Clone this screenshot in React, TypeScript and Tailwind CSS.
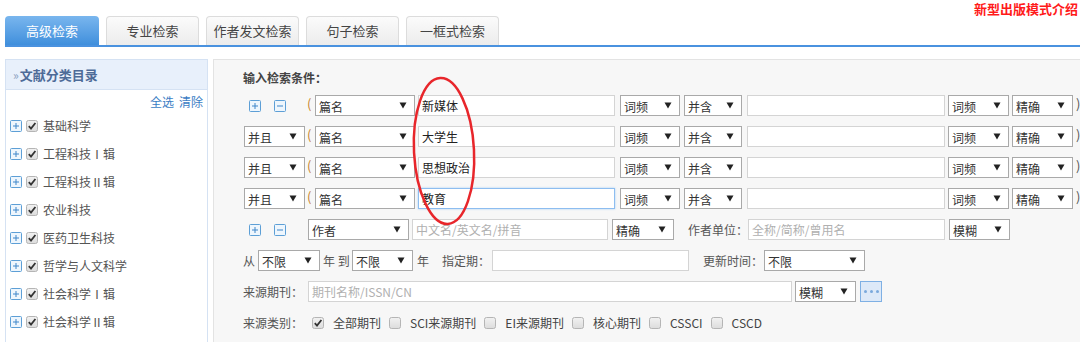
import React from 'react';

const FONT = '"Noto Sans CJK SC", "Noto Sans", sans-serif';

const TABS = ['高级检索', '专业检索', '作者发文检索', '句子检索', '一框式检索'];

const CATEGORIES = [
  '基础科学',
  '工程科技Ⅰ辑',
  '工程科技Ⅱ辑',
  '农业科技',
  '医药卫生科技',
  '哲学与人文科学',
  '社会科学Ⅰ辑',
  '社会科学Ⅱ辑',
];

const KEYWORDS = ['新媒体', '大学生', '思想政治', '教育'];

function Arrow() {
  return (
    <svg width="8" height="7" viewBox="0 0 8 7" className="shrink-0">
      <path d="M0.5 0.5 L7.5 0.5 L4 6.5 Z" fill="#222" />
    </svg>
  );
}

function Select({ text, className }: { text: string; className: string }) {
  return (
    <div
      className={`h-[21px] shrink-0 flex items-center justify-between border border-[#a9a9a9] bg-white pl-[3px] pr-[7px] text-[12px] text-[#333] ${className}`}
    >
      <span className="leading-none pt-[2px]">{text}</span>
      <Arrow />
    </div>
  );
}

function Field({
  className,
  value,
  placeholder,
  focus,
}: {
  className: string;
  value?: string;
  placeholder?: string;
  focus?: boolean;
}) {
  return (
    <div
      className={`h-[21px] shrink-0 flex items-center bg-white pl-[3px] text-[12px] ${
        focus ? 'border border-[#8dbdf0] shadow-[0_0_2px_#a8cff5]' : 'border border-[#d4d4d4]'
      } ${className}`}
    >
      {value ? (
        <span className="text-[#222]">{value}</span>
      ) : (
        <span className="text-[#b0b0b0]">{placeholder}</span>
      )}
    </div>
  );
}

function PlusBox({ minus }: { minus?: boolean }) {
  return (
    <svg width="12" height="12" viewBox="0 0 12 12" className="shrink-0">
      <rect x="0.5" y="0.5" width="11" height="11" rx="1" fill="#eef6fd" stroke="#5d9fd6" />
      <path d="M3 6 H9" stroke="#3f86c9" strokeWidth="1" />
      {!minus && <path d="M6 3 V9" stroke="#3f86c9" strokeWidth="1" />}
    </svg>
  );
}

function Check({ checked }: { checked?: boolean }) {
  return (
    <svg width="12" height="12" viewBox="0 0 12 12" className="shrink-0">
      <defs>
        <linearGradient id="cbg" x1="0" y1="0" x2="0" y2="1">
          <stop offset="0" stopColor="#f2f2f2" />
          <stop offset="1" stopColor="#dcdcdc" />
        </linearGradient>
      </defs>
      <rect x="0.5" y="0.5" width="11" height="11" rx="2" fill="url(#cbg)" stroke="#b5b5b5" />
      {checked && <path d="M2.8 6.2 L5 8.6 L9.4 3" fill="none" stroke="#333" strokeWidth="1.8" />}
    </svg>
  );
}

function IconPair() {
  return (
    <div className="flex items-center">
      <span className="ml-[6px]">
        <PlusBox />
      </span>
      <span className="ml-[13px]">
        <PlusBox minus />
      </span>
    </div>
  );
}

function ConditionRow({ index, value }: { index: number; value: string }) {
  return (
    <div className="flex items-center h-[21px] mb-[10px]">
      <div className="w-[62px] shrink-0 flex items-center">
        {index === 0 ? <IconPair /> : <Select text="并且" className="w-[61px] ml-[1px]" />}
      </div>
      <span className="w-[10px] shrink-0 pl-[2px] text-[13px] text-[#c7862f] leading-none -mt-[4px]">(</span>
      <Select text="篇名" className="w-[100px]" />
      <Field className="w-[197px] ml-[3px]" value={value} focus={index === 3} />
      <Select text="词频" className="w-[60px] ml-[5px]" />
      <Select text="并含" className="w-[58px] ml-[4px]" />
      <Field className="w-[198px] ml-[5px]" />
      <Select text="词频" className="w-[61px] ml-[3px]" />
      <Select text="精确" className="w-[61px] ml-[3px]" />
      <span className="ml-[3px] text-[13px] text-[#555] leading-none -mt-[4px]">)</span>
    </div>
  );
}

const SOURCE_TYPES = [
  { label: '全部期刊', checked: true },
  { label: 'SCI来源期刊' },
  { label: 'EI来源期刊' },
  { label: '核心期刊' },
  { label: 'CSSCI' },
  { label: 'CSCD' },
];

export default function App() {
  return (
    <div className="relative w-[1080px] h-[342px] overflow-hidden bg-white" style={{ fontFamily: FONT }}>
      {/* top link */}
      <div className="h-[16px] flex justify-end items-center pr-[2px]">
        <span className="text-[13px] font-bold text-[#ff1a1a] leading-none">新型出版模式介绍</span>
      </div>

      {/* tabs */}
      <div className="ml-[5px] flex gap-[7px] border-b-2 border-[#4a92df]">
        {TABS.map((t, i) => (
          <div
            key={t}
            className={
              i === 0
                ? 'w-[94px] h-[29px] flex items-center justify-center rounded-t-[4px] bg-gradient-to-b from-[#79b6ee] to-[#3f8fdc] text-white text-[13px]'
                : 'w-[93px] h-[29px] flex items-center justify-center rounded-t-[4px] border border-b-0 border-[#dcdcdc] bg-gradient-to-b from-[#fbfbfb] to-[#ececec] text-[#444] text-[13px]'
            }
          >
            {t}
          </div>
        ))}
      </div>

      {/* body */}
      <div className="flex mt-[12px]">
        {/* sidebar */}
        <div className="ml-[5px] w-[203px] h-[300px] shrink-0 border border-[#d5e2f3] bg-white">
          <div className="h-[30px] flex items-center pl-[7px] bg-[#e8f0fb] border-b border-[#d5e2f3]">
            <span className="text-[12px] text-[#8aa0c0] leading-none mr-[1px]">»</span>
            <span className="text-[13px] font-bold text-[#4d6b98]">文献分类目录</span>
          </div>
          <div className="h-[16px] mt-[4px] mb-[2px] flex justify-end items-center pr-[4px] text-[12px] text-[#3b7dc4] gap-[5px]">
            <span>全选</span>
            <span>清除</span>
          </div>
          {CATEGORIES.map((c) => (
            <div key={c} className="h-[28px] flex items-center pl-[4px]">
              <PlusBox />
              <span className="ml-[4px]">
                <Check checked />
              </span>
              <span className="ml-[5px] text-[12px] text-[#555]">{c}</span>
            </div>
          ))}
          <div className="h-[28px] flex items-center pl-[4px]">
            <PlusBox />
            <span className="ml-[4px]">
              <Check checked />
            </span>
          </div>
        </div>

        {/* main panel */}
        <div className="ml-[5px] flex-1 h-[300px] bg-[#f7f7f7] border border-[#e3e3e3] pl-[29px] pt-[10px] text-[12px] text-[#555]">
          <div className="h-[16px] flex items-center font-bold text-[#444]">输入检索条件：</div>
          <div className="mt-[9px]">
            {KEYWORDS.map((k, i) => (
              <ConditionRow key={k} index={i} value={k} />
            ))}

            {/* author row */}
            <div className="flex items-center h-[21px] mb-[10px]">
              <div className="w-[65px] shrink-0">
                <IconPair />
              </div>
              <Select text="作者" className="w-[101px]" />
              <Field className="w-[196px] ml-[3px]" placeholder="中文名/英文名/拼音" />
              <Select text="精确" className="w-[62px] ml-[4px]" />
              <span className="ml-[14px] w-[60px] shrink-0">作者单位：</span>
              <Field className="w-[197px]" placeholder="全称/简称/曾用名" />
              <Select text="模糊" className="w-[61px] ml-[4px]" />
            </div>

            {/* date row */}
            <div className="flex items-center h-[21px] mb-[10px]">
              <span className="w-[12px] shrink-0">从</span>
              <Select text="不限" className="w-[62px] ml-[3px]" />
              <span className="ml-[3px] w-[29px] shrink-0">年 到</span>
              <Select text="不限" className="w-[61px]" />
              <span className="ml-[4px] w-[12px] shrink-0">年</span>
              <span className="ml-[13px] w-[48px] shrink-0">指定期：</span>
              <Field className="w-[197px] ml-[2px]" />
              <span className="ml-[14px] w-[60px] shrink-0">更新时间：</span>
              <Select text="不限" className="w-[101px] ml-[1px]" />
            </div>

            {/* source row */}
            <div className="flex items-center h-[21px] mb-[10px]">
              <span className="w-[60px] shrink-0">来源期刊：</span>
              <Field className="w-[484px] ml-[5px]" placeholder="期刊名称/ISSN/CN" />
              <Select text="模糊" className="w-[61px] ml-[3px]" />
              <div className="ml-[4px] w-[22px] h-[21px] shrink-0 flex items-center justify-center gap-[3px] bg-[#dde9f8] border border-[#7fb0e4]">
                <span className="w-[3px] h-[3px] rounded-full bg-[#7aa9dc]" />
                <span className="w-[3px] h-[3px] rounded-full bg-[#7aa9dc]" />
                <span className="w-[3px] h-[3px] rounded-full bg-[#7aa9dc]" />
              </div>
            </div>

            {/* source type row */}
            <div className="flex items-center h-[21px]">
              <span className="w-[60px] shrink-0">来源类别：</span>
              <div className="ml-[9px] flex items-center">
                {SOURCE_TYPES.map((s) => (
                  <div key={s.label} className="flex items-center mr-[8px]">
                    <Check checked={s.checked} />
                    <span className="ml-[9px] text-[#444]">{s.label}</span>
                  </div>
                ))}
              </div>
            </div>
          </div>
        </div>
      </div>

      {/* hand-drawn annotation */}
      <svg className="absolute left-[404px] top-[70px] pointer-events-none" width="80" height="160" viewBox="0 0 80 160">
        <ellipse cx="40" cy="81" rx="30" ry="73" fill="none" stroke="#e8262b" strokeWidth="2.5" transform="rotate(-3 40 81)" />
      </svg>
    </div>
  );
}
